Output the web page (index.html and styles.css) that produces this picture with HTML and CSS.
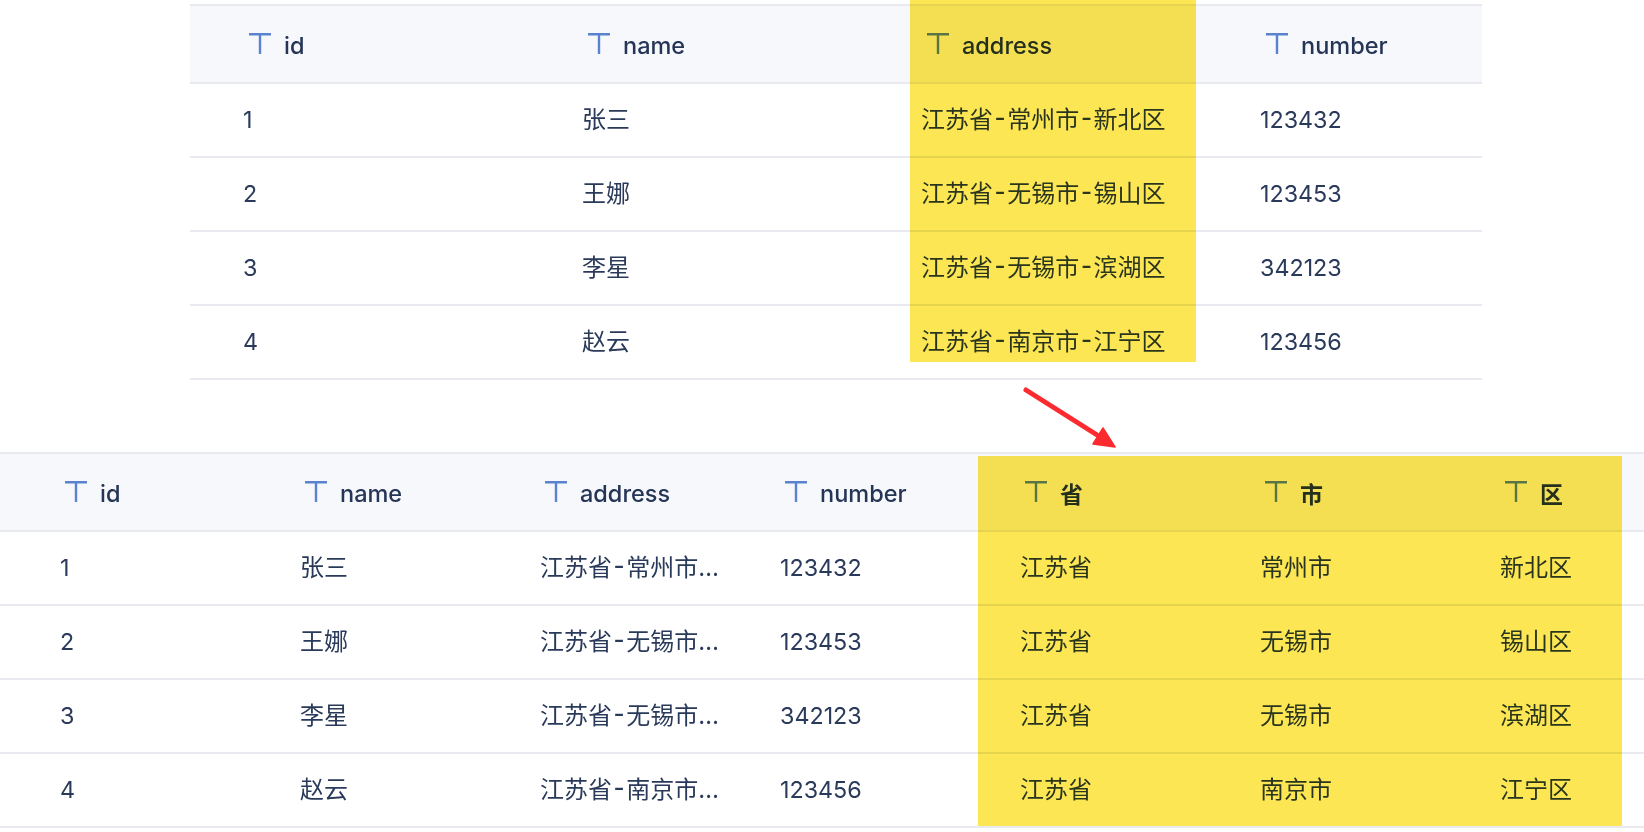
FILE: index.html
```html
<!DOCTYPE html>
<html lang="zh">
<head>
<meta charset="utf-8">
<title>地址拆分</title>
<link rel="stylesheet" href="styles.css">
</head>
<body>
<svg width="0" height="0" class="defs"><symbol id="t" viewBox="0 0 22 21"><path d="M0 1.2h22M11 1.2V21" fill="none" stroke="currentColor" stroke-width="2.4"/></symbol></svg>
<main class="page">
  <section class="table table-top">
    <div class="row head">
      <div class="cell"><svg class="ico"><use href="#t"/></svg>id</div>
      <div class="cell"><svg class="ico"><use href="#t"/></svg>name</div>
      <div class="cell"><svg class="ico"><use href="#t"/></svg>address</div>
      <div class="cell"><svg class="ico"><use href="#t"/></svg>number</div>
    </div>
    <div class="row"><div class="cell">1</div><div class="cell cjk">张三</div><div class="cell cjk">江苏省<span class="dash">-</span>常州市<span class="dash">-</span>新北区</div><div class="cell">123432</div></div>
    <div class="row"><div class="cell">2</div><div class="cell cjk">王娜</div><div class="cell cjk">江苏省<span class="dash">-</span>无锡市<span class="dash">-</span>锡山区</div><div class="cell">123453</div></div>
    <div class="row"><div class="cell">3</div><div class="cell cjk">李星</div><div class="cell cjk">江苏省<span class="dash">-</span>无锡市<span class="dash">-</span>滨湖区</div><div class="cell">342123</div></div>
    <div class="row"><div class="cell">4</div><div class="cell cjk">赵云</div><div class="cell cjk">江苏省<span class="dash">-</span>南京市<span class="dash">-</span>江宁区</div><div class="cell">123456</div></div>
  </section>
  <section class="table table-bottom">
    <div class="row head">
      <div class="cell"><svg class="ico"><use href="#t"/></svg>id</div>
      <div class="cell"><svg class="ico"><use href="#t"/></svg>name</div>
      <div class="cell"><svg class="ico"><use href="#t"/></svg>address</div>
      <div class="cell"><svg class="ico"><use href="#t"/></svg>number</div>
      <div class="cell split"><svg class="ico"><use href="#t"/></svg>省</div>
      <div class="cell split"><svg class="ico"><use href="#t"/></svg>市</div>
      <div class="cell split"><svg class="ico"><use href="#t"/></svg>区</div>
    </div>
    <div class="row"><div class="cell">1</div><div class="cell cjk">张三</div><div class="cell cjk">江苏省<span class="dash">-</span>常州市…</div><div class="cell">123432</div><div class="cell cjk split">江苏省</div><div class="cell cjk split">常州市</div><div class="cell cjk split">新北区</div></div>
    <div class="row"><div class="cell">2</div><div class="cell cjk">王娜</div><div class="cell cjk">江苏省<span class="dash">-</span>无锡市…</div><div class="cell">123453</div><div class="cell cjk split">江苏省</div><div class="cell cjk split">无锡市</div><div class="cell cjk split">锡山区</div></div>
    <div class="row"><div class="cell">3</div><div class="cell cjk">李星</div><div class="cell cjk">江苏省<span class="dash">-</span>无锡市…</div><div class="cell">342123</div><div class="cell cjk split">江苏省</div><div class="cell cjk split">无锡市</div><div class="cell cjk split">滨湖区</div></div>
    <div class="row"><div class="cell">4</div><div class="cell cjk">赵云</div><div class="cell cjk">江苏省<span class="dash">-</span>南京市…</div><div class="cell">123456</div><div class="cell cjk split">江苏省</div><div class="cell cjk split">南京市</div><div class="cell cjk split">江宁区</div></div>
  </section>
  <div class="mark mark-top"></div>
  <div class="mark mark-bottom"></div>
  <svg class="arrow" width="110" height="70" viewBox="0 0 110 70">
    <path d="M6 6 L85 56" fill="none" stroke="#fb2b30" stroke-width="5" stroke-linecap="round"/>
    <path d="M83 44 L95 63 L73 60 Z" fill="#fb2b30" stroke="#fb2b30" stroke-width="1.5" stroke-linejoin="round"/>
  </svg>
</main>
</body>
</html>
```
FILE: styles.css
```css
html, body {
  margin: 0;
  height: 832px;
  background: #fff;
  overflow: hidden;
}
.defs { position: absolute; }
.page {
  position: relative;
  width: 1644px;
  height: 832px;
  padding-top: 4px;
  box-sizing: border-box;
  overflow: hidden;
  font-family: "Inter", "Noto Sans CJK SC", sans-serif;
  font-size: 23.3px;
  color: #2a3a5a;
}
.table { border-top: 2px solid #e9eaf0; }
.table-top { width: 1292px; margin-left: 190px; }
.table-bottom { width: 1680px; margin-top: 72px; }
.row {
  display: grid;
  height: 74px;
  box-sizing: border-box;
  border-bottom: 2px solid #e9eaf0;
}
.table-top .row { grid-template-columns: 339px 339px 339px 275px; }
.table-bottom .row { grid-template-columns: repeat(7, 240px); }
.row.head {
  height: 78px;
  background: #f7f8fc;
  font-size: 23.5px;
  font-weight: 550;
  color: #253556;
}
.cell {
  display: flex;
  align-items: center;
  min-width: 0;
  white-space: nowrap;
  padding-bottom: 1px;
}
.cell.cjk {
  font-size: 24px;
  padding-bottom: 5px;
}
.dash { margin: 0 1.6px; font-weight: 500; }
.table-top .cell { padding-left: 53px; }
.table-bottom .cell { padding-left: 60px; }
.table-top .head .cell { padding-left: 59px; padding-top: 3px; }
.table-bottom .head .cell { padding-left: 65px; padding-top: 3px; }
.table-bottom .cell.split { padding-left: 60px; }
.table-bottom .head .cell.split { padding-left: 65px; font-size: 23px; font-weight: 600; }
.ico {
  width: 22px;
  height: 21px;
  margin-right: 13px;
  margin-top: -4px;
  color: #5b82d0;
  flex: none;
}
.mark {
  position: absolute;
  background: #fce653;
  mix-blend-mode: multiply;
}
.mark-top { left: 910px; top: 0; width: 286px; height: 362px; }
.mark-bottom { left: 978px; top: 456px; width: 644px; height: 370px; }
.arrow { position: absolute; left: 1020px; top: 384px; }
```
